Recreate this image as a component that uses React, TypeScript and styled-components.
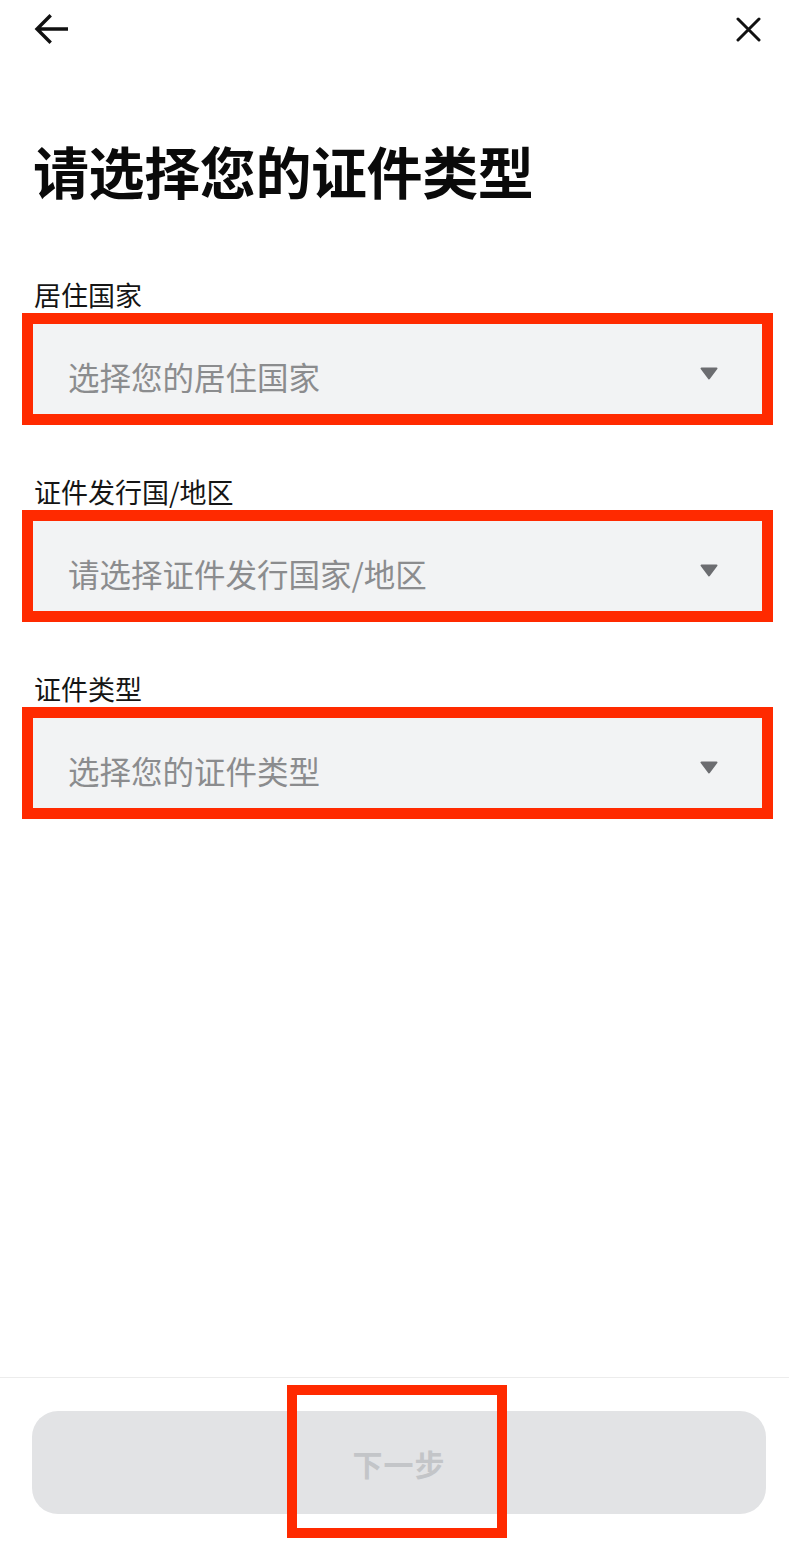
import React from 'react';
import styled, { createGlobalStyle } from 'styled-components';

const GlobalStyle = createGlobalStyle`
  html, body {
    margin: 0;
    padding: 0;
    background: #ffffff;
  }
  body {
    font-family: "Noto Sans CJK SC", "Noto Sans", Roboto, sans-serif;
    color: #111111;
  }
  * {
    box-sizing: border-box;
  }
`;

const Page = styled.div`
  min-height: 1547px;
  display: flex;
  flex-direction: column;
  background: #ffffff;
`;

const TopBar = styled.div`
  height: 58px;
  display: flex;
  align-items: center;
  justify-content: space-between;
  padding: 0 28px 0 34px;
`;

const IconButton = styled.button`
  border: none;
  background: none;
  padding: 0;
  display: flex;
  align-items: center;
  justify-content: center;
  cursor: pointer;
  color: #111111;
`;

const Content = styled.div`
  flex: 1;
  padding: 0 27px 0 33px;
`;

const Title = styled.h1`
  margin: 78px 0 0 0;
  font-size: 56px;
  line-height: 68px;
  font-weight: 700;
  letter-spacing: -0.4px;
  color: #0a0a0a;
`;

const Field = styled.div<{ $first?: boolean }>`
  margin-top: ${(p) => (p.$first ? '73px' : '60px')};
`;

const Label = styled.label`
  display: block;
  font-size: 27px;
  line-height: 36px;
  color: #151515;
  margin-left: 1px;
  margin-bottom: 11px;
`;

const SelectBox = styled.div<{ $marked?: boolean }>`
  height: 90px;
  background: #f2f3f4;
  display: flex;
  align-items: center;
  justify-content: space-between;
  padding: 14px 44px 0 35px;
  outline: ${(p) => (p.$marked ? '11px solid #ff2a00' : 'none')};
  cursor: pointer;
`;

const Placeholder = styled.span`
  font-size: 31.5px;
  line-height: 40px;
  color: #8b8c8e;
`;

const Caret = styled.svg`
  width: 18px;
  height: 13px;
  margin-top: -6px;
  flex-shrink: 0;
`;

const Footer = styled.div`
  position: relative;
  border-top: 1px solid #ececec;
  padding: 33px 23px 33px 32px;
`;

const NextButton = styled.button`
  width: 100%;
  height: 103px;
  border: none;
  border-radius: 26px;
  background: #e2e3e5;
  color: #c3c5c8;
  font-family: "Noto Sans CJK SC", "Noto Sans", sans-serif;
  font-size: 30px;
  font-weight: 700;
  letter-spacing: 1px;
`;

const Marker = styled.div`
  position: absolute;
  left: 287px;
  top: 7px;
  width: 220px;
  height: 153px;
  border: 10px solid #ff2a00;
  pointer-events: none;
`;

const DropdownCaret = () => (
  <Caret viewBox="0 0 18 13">
    <path d="M1.5 1.5 H16.5 L9 11.5 Z" fill="#6c6d70" stroke="#6c6d70" strokeWidth="2" strokeLinejoin="round" />
  </Caret>
);

const fields = [
  { label: '居住国家', placeholder: '选择您的居住国家' },
  { label: '证件发行国/地区', placeholder: '请选择证件发行国家/地区' },
  { label: '证件类型', placeholder: '选择您的证件类型' },
];

export default function App() {
  return (
    <Page>
      <GlobalStyle />
      <TopBar>
        <IconButton aria-label="back">
          <svg width="34" height="30" viewBox="0 0 34 30" fill="none">
            <path d="M33 15 H4 M15.5 2.5 L3 15 L15.5 27.5" stroke="#111" strokeWidth="3.4" strokeLinecap="square" />
          </svg>
        </IconButton>
        <IconButton aria-label="close">
          <svg width="25" height="25" viewBox="0 0 25 25" fill="none">
            <path d="M2 2 L23 23 M23 2 L2 23" stroke="#111" strokeWidth="3" strokeLinecap="round" />
          </svg>
        </IconButton>
      </TopBar>
      <Content>
        <Title>请选择您的证件类型</Title>
        {fields.map((f, i) => (
          <Field key={f.label} $first={i === 0}>
            <Label>{f.label}</Label>
            <SelectBox $marked>
              <Placeholder>{f.placeholder}</Placeholder>
              <DropdownCaret />
            </SelectBox>
          </Field>
        ))}
      </Content>
      <Footer>
        <NextButton disabled>下一步</NextButton>
        <Marker />
      </Footer>
    </Page>
  );
}
